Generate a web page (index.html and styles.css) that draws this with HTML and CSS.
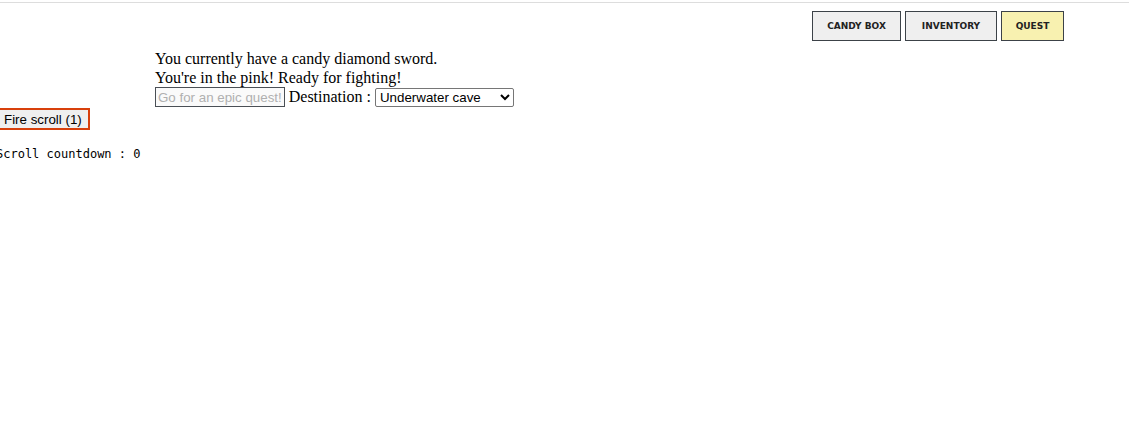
FILE: index.html
```html
<!DOCTYPE html>
<html>
<head>
<meta charset="utf-8">
<link rel="stylesheet" href="styles.css">
</head>
<body>
<div class="topline"></div>
<nav class="tabs">
  <button class="tab">CANDY BOX</button>
  <button class="tab">INVENTORY</button>
  <button class="tab tab-active">QUEST</button>
</nav>
<div class="quest">
  <div class="line">You currently have a candy diamond sword.</div>
  <div class="line">You're in the pink! Ready for fighting!</div>
  <div class="row">
    <button class="go" disabled>Go for an epic quest!</button>
    <span class="dest">Destination :</span>
    <select class="select">
      <option>Underwater cave</option>
    </select>
  </div>
</div>
<button class="fire">Fire scroll (1)</button>
<pre class="countdown">Scroll countdown : 0</pre>
</body>
</html>
```

FILE: styles.css
```css
html, body {
  margin: 0;
  padding: 0;
  background: #fff;
  overflow: hidden;
}
body {
  font-family: "Liberation Serif", serif;
  font-size: 16px;
  color: #000;
}
.topline {
  height: 2px;
  border-bottom: 1px solid #dddddd;
}
.tabs {
  display: flex;
  justify-content: flex-end;
  gap: 4px;
  padding: 8px 65px 0 0;
}
.tab {
  height: 30px;
  box-sizing: border-box;
  border: 1px solid #3c4248;
  background: #efefef;
  color: #222;
  font-family: "DejaVu Sans", sans-serif;
  font-weight: bold;
  font-size: 9px;
  padding: 0 10px;
  margin: 0;
}
.tabs .tab:nth-child(1) { width: 89px; }
.tabs .tab:nth-child(2) { width: 92px; }
.tab-active {
  width: 63px;
  background: #f8f1b0;
}
.quest {
  margin: 9px 0 0 155px;
  line-height: 18.5px;
}
.row {
  display: flex;
  align-items: center;
  gap: 4px;
  height: 20px;
}
.go {
  height: 20px;
  box-sizing: border-box;
  border: 1px solid #4a4f55;
  background: #fafafa;
  color: #b0b0b0;
  font-family: "Liberation Sans", sans-serif;
  font-size: 13.33px;
  padding: 0 2px;
  margin: 0;
}
.select {
  height: 19px;
  width: 139px;
  box-sizing: border-box;
  border: 1px solid #767676;
  border-radius: 2px;
  background: #fff;
  font-family: "Liberation Sans", sans-serif;
  font-size: 13.33px;
  color: #000;
  margin: 0;
}
.fire {
  display: block;
  margin: 1px 0 0 -4px;
  height: 22px;
  box-sizing: border-box;
  border: 2px solid #d8400c;
  background: #efefef;
  color: #000;
  font-family: "Liberation Sans", sans-serif;
  font-size: 13.33px;
  padding: 0 6px;
}
.countdown {
  margin: 17px 0 0 -4px;
  font-family: "DejaVu Sans Mono", monospace;
  font-size: 12px;
  line-height: 14px;
}
```
